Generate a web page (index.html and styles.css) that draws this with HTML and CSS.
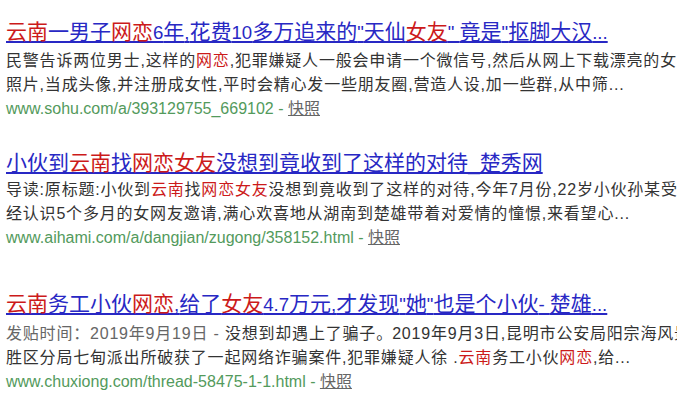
FILE: index.html
```html
<!DOCTYPE html>
<html lang="zh-CN">
<head>
<meta charset="utf-8">
<title>搜索结果</title>
<link rel="stylesheet" href="styles.css">
</head>
<body>
<div class="results">
  <div class="result r1">
    <h3 class="title"><a href="#"><em>云南</em>一男子<em>网恋</em><span class="lt">6</span>年<span class="lt">,</span>花费<span class="lt">10</span>多万追来的<span class="lt">"</span>天仙<em>女友</em><span class="lt">" </span>竟是<span class="lt">"</span>抠脚大汉<span class="lt">...</span></a></h3>
    <div class="abstract">
      <div class="line">民警告诉两位男士,这样的<em>网恋</em>,犯罪嫌疑人一般会申请一个微信号,然后从网上下载漂亮的女性</div>
      <div class="line">照片,当成头像,并注册成女性,平时会精心发一些朋友圈,营造人设,加一些群,从中筛...</div>
    </div>
    <div class="url">www.sohu.com/a/393129755_669102 - <a class="snap" href="#">快照</a></div>
  </div>
  <div class="result r2">
    <h3 class="title"><a href="#">小伙到<em>云南</em>找<em>网恋女友</em>没想到竟收到了这样的对待_楚秀网</a></h3>
    <div class="abstract">
      <div class="line">导读:原标题:小伙到<em>云南</em>找<em>网恋女友</em>没想到竟收到了这样的对待,今年7月份,22岁小伙孙某受已</div>
      <div class="line">经认识5个多月的女网友邀请,满心欢喜地从湖南到楚雄带着对爱情的憧憬,来看望心...</div>
    </div>
    <div class="url">www.aihami.com/a/dangjian/zugong/358152.html - <a class="snap" href="#">快照</a></div>
  </div>
  <div class="result r3">
    <h3 class="title"><a href="#"><em>云南</em>务工小伙<em>网恋</em><span class="lt">,</span>给了<em>女友</em><span class="lt">4.7</span>万元<span class="lt">,</span>才发现<span class="lt">"</span>她<span class="lt">"</span>也是个小伙<span class="lt">- </span>楚雄<span class="lt">...</span></a></h3>
    <div class="abstract">
      <div class="line"><span class="date">发贴时间：2019年9月19日 - </span>没想到却遇上了骗子<span class="stop">。</span>2019年9月3日,昆明市公安局阳宗海风景名</div>
      <div class="line">胜区分局七甸派出所破获了一起网络诈骗案件,犯罪嫌疑人徐 .<em>云南</em>务工小伙<em>网恋</em>,给...</div>
    </div>
    <div class="url">www.chuxiong.com/thread-58475-1-1.html - <a class="snap" href="#">快照</a></div>
  </div>
</div>
</body>
</html>
```

FILE: styles.css
```css
html, body {
  margin: 0;
  padding: 0;
  background: #ffffff;
  overflow: hidden;
}

body {
  width: 677px;
  height: 400px;
  font-family: "Liberation Sans", Arial, "Noto Sans CJK SC", sans-serif;
}

.results {
  padding: 19px 0 0 6px;
  display: flex;
  flex-direction: column;
}

.result {
  display: flex;
  flex-direction: column;
}

.r2 { margin-top: 29px; }
.r3 { margin-top: 41px; }

.title {
  margin: 0;
  font-weight: normal;
  font-size: 21px;
  line-height: 26px;
  white-space: nowrap;
}

.title a {
  color: #2828c4;
  text-decoration: underline;
  text-underline-offset: 2px;
}

.title .lt {
  font-size: 18.6px;
}

.title em {
  font-style: normal;
  color: #cc1a1a;
}

.abstract {
  margin-top: 3px;
  font-size: 16px;
  letter-spacing: 0.8px;
  line-height: 24px;
  color: #333333;
}

.r2 .abstract { margin-top: 2px; }
.r3 .abstract { margin-top: 4px; }

.line {
  white-space: nowrap;
}

.abstract em {
  font-style: normal;
  color: #cc1a1a;
}

.stop {
  letter-spacing: -6px;
  margin-right: 6px;
}

.date {
  color: #666666;
}

.url {
  font-size: 16px;
  line-height: 24px;
  color: #539a5c;
  white-space: nowrap;
}

.snap {
  color: #666666;
  text-decoration: underline;
}
```
